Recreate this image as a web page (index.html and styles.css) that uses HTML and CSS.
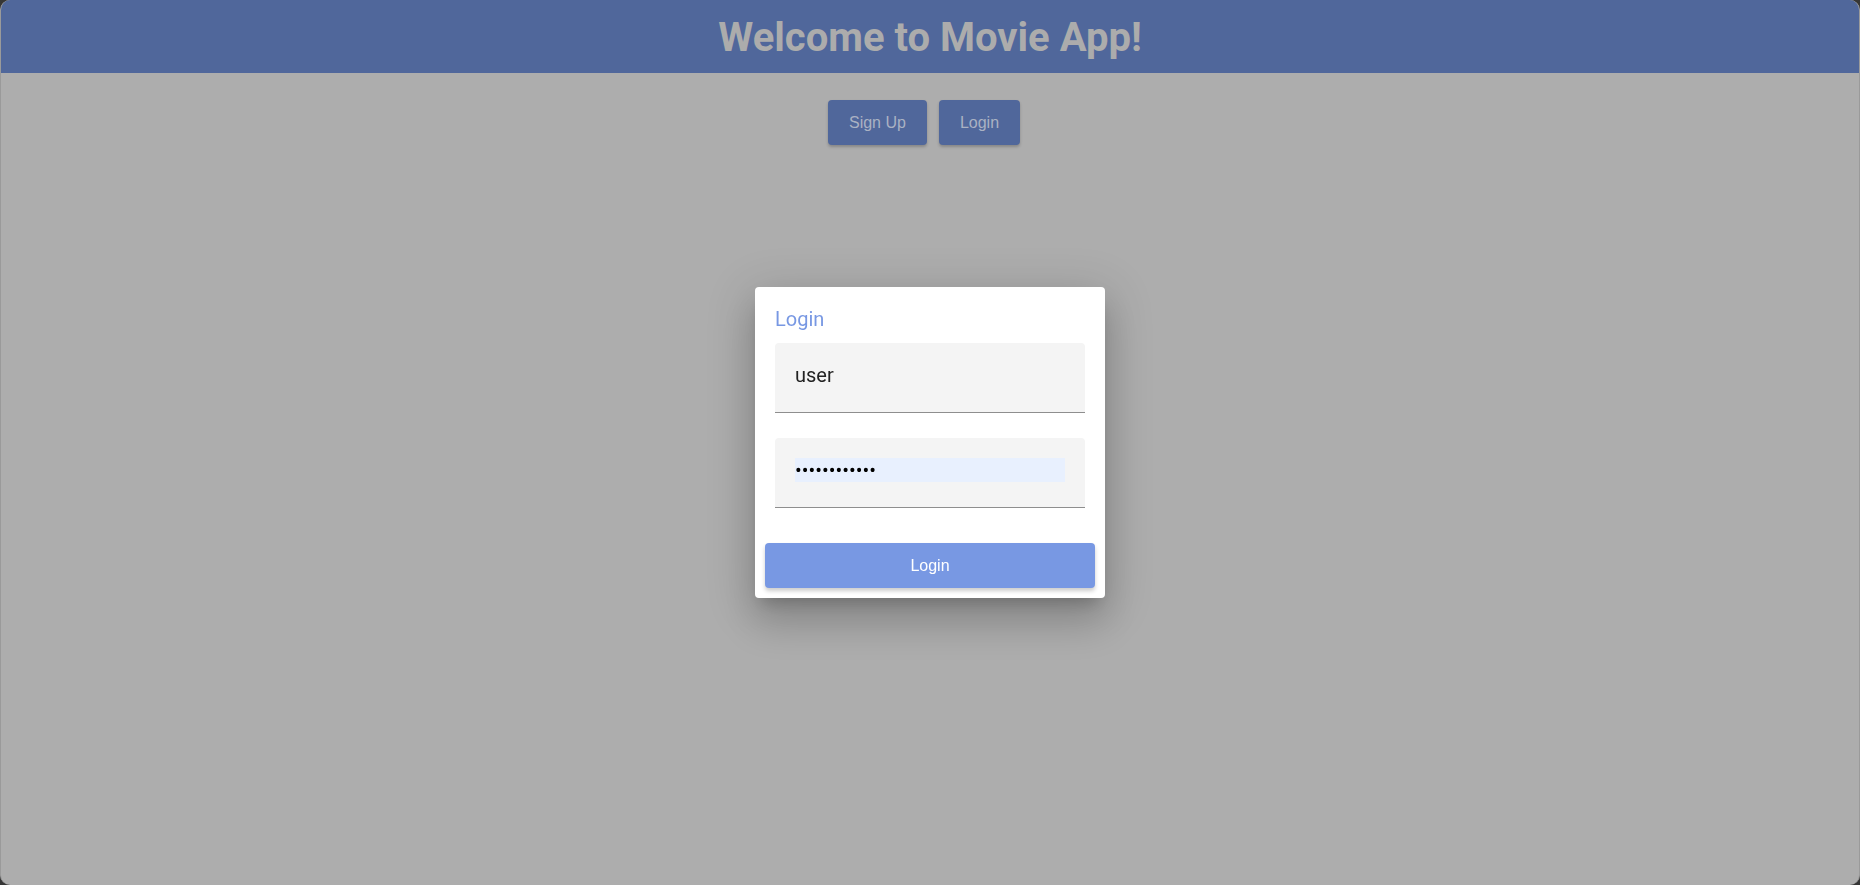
FILE: index.html
```html
<!DOCTYPE html>
<html lang="en">
<head>
<meta charset="utf-8">
<title>Movie App</title>
<link rel="stylesheet" href="styles.css">
</head>
<body>
<div class="frame">
  <header class="topbar">
    <h1 class="title">Welcome to Movie App!</h1>
  </header>
  <nav class="nav">
    <button class="nav-btn" type="button">Sign Up</button>
    <button class="nav-btn" type="button">Login</button>
  </nav>
</div>
<div class="overlay">
  <div class="dialog">
    <h2 class="dialog-title">Login</h2>
    <div class="field">
      <input class="field-input" type="text" value="user">
    </div>
    <div class="field field-gap">
      <input class="field-input autofill" type="password" value="............">
    </div>
    <div class="actions">
      <button class="primary-btn" type="button">Login</button>
    </div>
  </div>
</div>
</body>
</html>
```
FILE: styles.css
```css
html, body {
  margin: 0;
  padding: 0;
  height: 100%;
}
body {
  background: #363636;
  font-family: Roboto, "Liberation Sans", Arial, sans-serif;
  overflow: hidden;
}
.frame {
  height: 885px;
  box-sizing: border-box;
  border-radius: 10px;
  overflow: hidden;
  background: #adadad;
  border-left: 1px solid #9a9a9a;
  border-right: 1px solid #9a9a9a;
}
.topbar {
  background: #50679b;
  height: 73px;
  box-sizing: border-box;
  padding-top: 14px;
  text-align: center;
}
.title {
  margin: 0;
  font-family: Roboto, sans-serif;
  font-weight: 700;
  font-size: 40px;
  line-height: 47px;
  color: #acacac;
}
.nav {
  display: flex;
  justify-content: center;
  padding-top: 27px;
}
.nav-btn {
  height: 45px;
  padding: 0 21px;
  margin-right: 12px;
  border: none;
  border-radius: 4px;
  background: #50679b;
  color: #aab2c3;
  font-family: "Liberation Sans", Arial, sans-serif;
  font-size: 16px;
  box-shadow: 0 2px 3px rgba(0, 0, 0, 0.22);
}
.overlay {
  position: fixed;
  inset: 0;
  display: flex;
  align-items: center;
  justify-content: center;
}
.dialog {
  width: 350px;
  box-sizing: border-box;
  background: #ffffff;
  border-radius: 4px;
  padding: 20px 10px 10px;
  box-shadow: 0 11px 15px -7px rgba(0, 0, 0, 0.2),
              0 24px 38px 3px rgba(0, 0, 0, 0.14),
              0 9px 46px 8px rgba(0, 0, 0, 0.12);
}
.dialog-title {
  margin: 0 10px 12px;
  font-family: Roboto, sans-serif;
  font-weight: 400;
  font-size: 20px;
  line-height: 24px;
  color: #7898e3;
}
.field {
  margin: 0 10px;
  height: 70px;
  box-sizing: border-box;
  background: #f4f4f4;
  border-radius: 4px 4px 0 0;
  border-bottom: 1px solid #8e8e8e;
  display: flex;
  align-items: center;
  padding: 0 20px;
}
.field-gap {
  margin-top: 25px;
}
.field-input {
  width: 100%;
  height: 24px;
  margin-top: -6px;
  border: none;
  outline: none;
  padding: 0;
  background: transparent;
  font-family: Roboto, sans-serif;
  font-size: 20px;
  color: #222222;
}
.autofill {
  background: #e8f0fe;
  color: #000;
}
.actions {
  margin-top: 35px;
}
.primary-btn {
  width: 100%;
  height: 45px;
  border: none;
  border-radius: 4px;
  background: #7898e3;
  color: #ffffff;
  font-family: "Liberation Sans", Arial, sans-serif;
  font-size: 16px;
  box-shadow: 0 3px 4px rgba(0, 0, 0, 0.2);
}
```
